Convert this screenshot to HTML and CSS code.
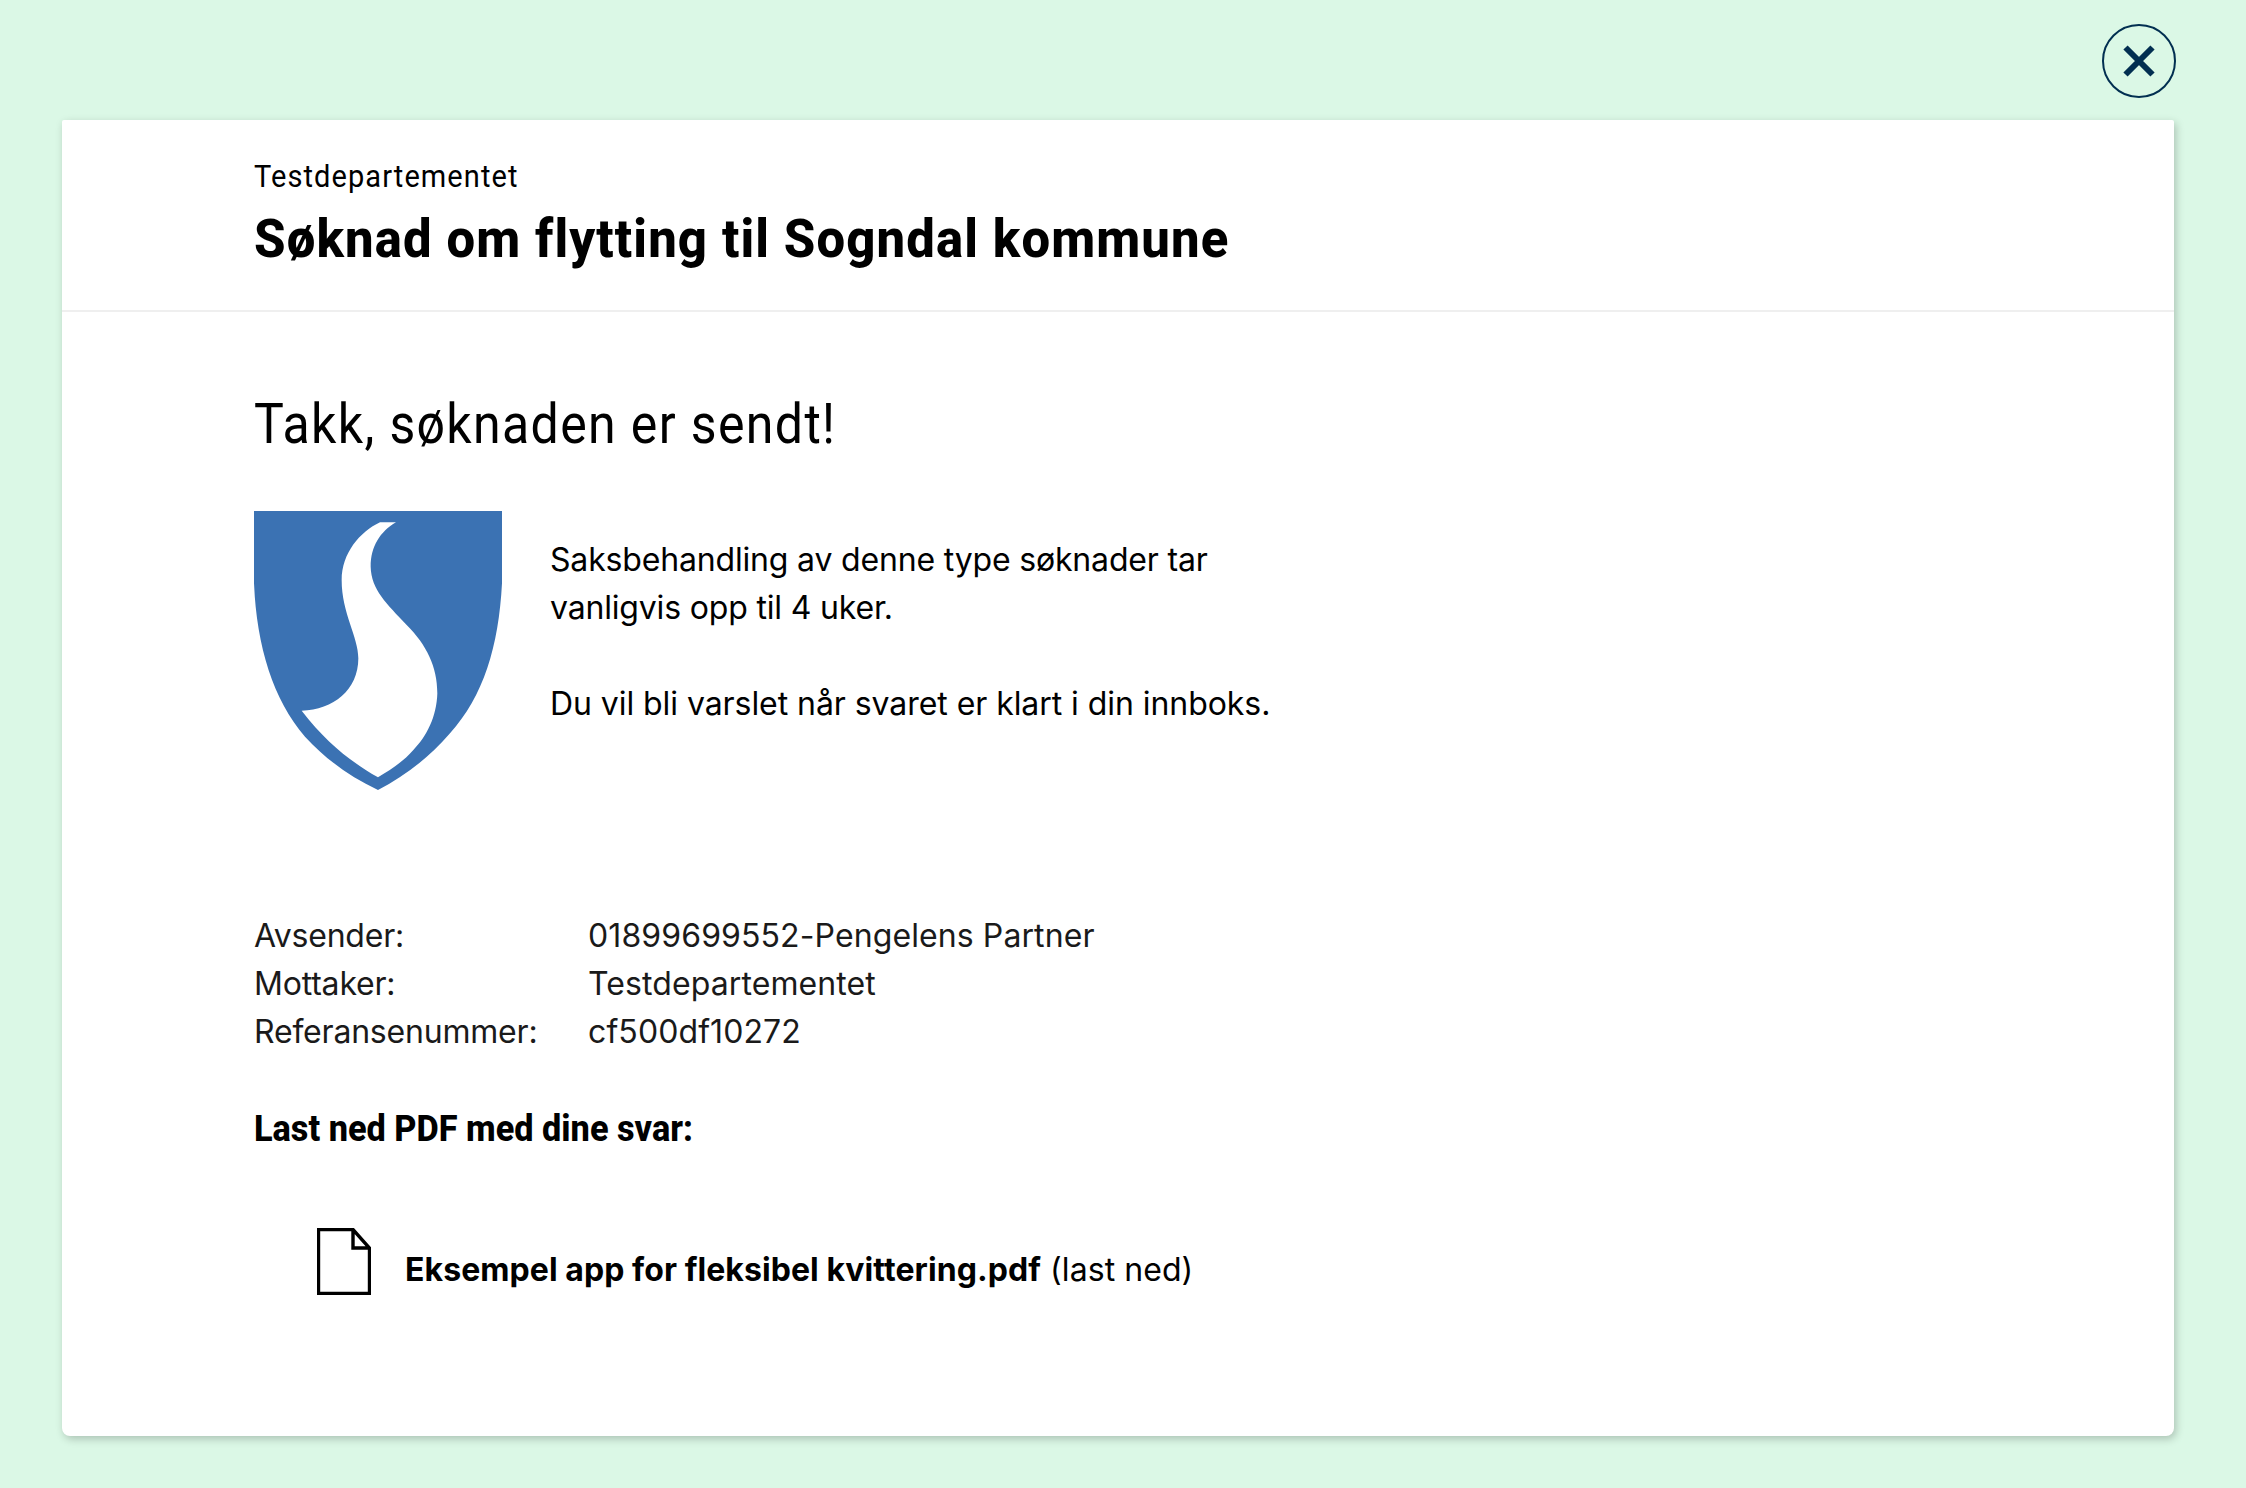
FILE: index.html
```html
<!DOCTYPE html>
<html lang="nb">
<head>
    <meta charset="UTF-8">
    <title>Kvittering</title>
    <link rel="stylesheet" href="styles.css">
</head>
<body>
<div class="topBar">
    <button class="closeBtn" aria-label="Lukk">
        <svg width="32" height="32" viewBox="0 0 32 32"><path d="M2.5 2.5 L29.5 29.5 M29.5 2.5 L2.5 29.5" stroke="#022f51" stroke-width="6" fill="none"/></svg>
    </button>
</div>
<div class="card">
    <header class="cardHead">
        <div class="owner">Testdepartementet</div>
        <h1 class="title">Søknad om flytting til Sogndal kommune</h1>
    </header>
    <main class="cardBody">
        <h2 class="thanks">Takk, søknaden er sendt!</h2>
        <div class="intro">
            <svg class="shield" width="248" height="279" viewBox="72 63 744 837">
                <path fill="#3b72b3" d="M72 63 H816 V280 C806 470 760 620 660 730 C590 810 520 860 444 900 C360 860 290 810 225 740 C130 630 80 470 72 280 Z"/>
                <path fill="#fff" d="M450 97 H498 C450 125 422 170 422 230 C424 300 470 340 530 405 C590 465 622 530 622 610 C620 680 590 740 550 780 C520 815 480 840 444 862 C370 820 290 760 215 662 C310 660 385 600 385 505 C385 440 335 370 335 270 C335 190 390 125 450 97 Z"/>
            </svg>
            <div class="introText">
                <p>Saksbehandling av denne type søknader tar<br>vanligvis opp til 4 uker.</p>
                <p>Du vil bli varslet når svaret er klart i din innboks.</p>
            </div>
        </div>
        <dl class="facts">
            <dt>Avsender:</dt><dd>01899699552-Pengelens Partner</dd>
            <dt>Mottaker:</dt><dd>Testdepartementet</dd>
            <dt>Referansenummer:</dt><dd>cf500df10272</dd>
        </dl>
        <h3 class="pdfHead">Last ned PDF med dine svar:</h3>
        <div class="fileRow">
            <svg width="54" height="67" viewBox="0 0 54 67"><path d="M1.5 1.5 H36 L52.5 20 V65.5 H1.5 Z M36 1.5 V20 H52.5" fill="none" stroke="#000" stroke-width="3.4"/></svg>
            <span class="fileLink"><b>Eksempel app for fleksibel kvittering.pdf</b> (last ned)</span>
        </div>
    </main>
</div>
</body>
</html>
```

FILE: styles.css
```css
* {
    margin: 0;
    padding: 0;
    box-sizing: border-box;
}

html, body {
    height: 100%;
}

body {
    background: #dbf8e6;
    font-family: "Inter", "Liberation Sans", sans-serif;
    color: #000;
    padding: 24px 72px 52px 62px;
    overflow: hidden;
}

.topBar {
    display: flex;
    justify-content: flex-end;
    height: 96px;
}

.closeBtn {
    display: flex;
    align-items: center;
    justify-content: center;
    width: 74px;
    height: 74px;
    margin-right: -2px;
    border: 2px solid #022f51;
    border-radius: 50%;
    background: none;
}

.card {
    height: 1316px;
    background: #fff;
    border-radius: 2px 2px 8px 8px;
    box-shadow: 2px 3px 8px rgba(0, 0, 0, 0.22);
}

.cardHead {
    height: 192px;
    padding: 37px 0 0 192px;
    border-bottom: 2px solid #efefef;
}

/* the headings use a narrow DIN type, so Roboto is squeezed to its width */
.owner, .title, .thanks, .pdfHead {
    font-family: "Roboto", "Liberation Sans", sans-serif;
    transform-origin: left center;
}

.owner {
    font-size: 32px;
    line-height: 38px;
    letter-spacing: 1.2px;
    transform: scaleX(0.906);
}

.title {
    margin-top: 12px;
    font-size: 54px;
    line-height: 64px;
    letter-spacing: 1.2px;
    font-weight: 800;
    transform: scaleX(0.941);
}

.cardBody {
    padding: 80px 0 0 192px;
}

.thanks {
    font-size: 56px;
    line-height: 64px;
    letter-spacing: 1.5px;
    font-weight: 400;
    transform: scaleX(0.894);
}

.intro {
    display: flex;
    gap: 48px;
    margin-top: 55px;
}

.shield {
    flex: none;
}

.introText {
    padding-top: 25px;
    font-size: 32px;
    line-height: 48px;
    letter-spacing: -0.17px;
}

.introText p + p {
    margin-top: 48px;
    letter-spacing: -0.06px;
}

.facts {
    display: grid;
    grid-template-columns: 334px 1fr;
    margin-top: 122px;
    font-size: 32px;
    line-height: 48px;
    color: #1a1a1a;
}

.facts dt {
    letter-spacing: -0.2px;
}

.facts dd {
    letter-spacing: 0.1px;
}

.pdfHead {
    margin-top: 49px;
    font-size: 36px;
    line-height: 48px;
    font-weight: 800;
    transform: scaleX(0.952);
}

.fileRow {
    display: flex;
    align-items: flex-start;
    gap: 34px;
    margin: 75px 0 0 63px;
    font-size: 32px;
    line-height: 48px;
}

.fileLink {
    margin-top: 18px;
    letter-spacing: 0.07px;
}

.fileLink b {
    font-weight: 700;
}
```
